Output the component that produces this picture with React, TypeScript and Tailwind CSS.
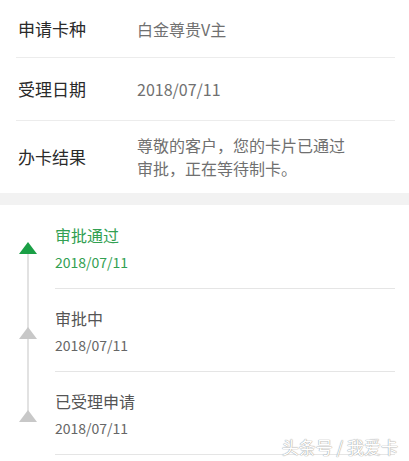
import React from "react";

const font = { fontFamily: '"Noto Sans CJK SC", "Noto Sans", sans-serif' };

function Tri({ color }: { color: string }) {
  return (
    <svg width="18" height="12" viewBox="0 0 18 12" className="block">
      <polygon points="9,0 18,12 0,12" fill={color} />
    </svg>
  );
}

const steps = [
  { title: "审批通过", date: "2018/07/11", active: true },
  { title: "审批中", date: "2018/07/11", active: false },
  { title: "已受理申请", date: "2018/07/11", active: false },
];

export default function App() {
  return (
    <div
      className="relative w-[409px] h-[461px] overflow-hidden bg-white"
      style={font}
    >
      <div className="pl-4 pr-[14px]">
        <div className="flex h-[58px] items-center border-b border-[#ececec]">
          <div className="w-[121px] pl-[2px] text-[17px] text-[#2a2a2a]">申请卡种</div>
          <div className="text-[16px] text-[#707070]">白金尊贵V主</div>
        </div>
        <div className="flex h-[63px] items-center border-b border-[#ececec]">
          <div className="w-[121px] pl-[2px] text-[17px] text-[#2a2a2a]">受理日期</div>
          <div className="text-[16px] text-[#707070]">2018/07/11</div>
        </div>
        <div className="flex h-[72px] items-center">
          <div className="w-[121px] pl-[2px] text-[17px] text-[#2a2a2a]">办卡结果</div>
          <div className="w-[222px] text-[16px] leading-[23px] text-[#707070]">
            尊敬的客户，您的卡片已通过审批，正在等待制卡。
          </div>
        </div>
      </div>
      <div className="h-[12px] bg-[#f2f2f2]" />
      <div className="relative">
        <div className="absolute left-[27px] top-[49px] h-[168px] w-[2px] bg-[#e2e2e2]" />
        {steps.map((s, i) => (
          <div key={i} className="relative flex">
            <div className="relative w-[55px] shrink-0">
              <div className={`absolute left-[19px] ${i === 0 ? "top-[37px]" : "top-[38px]"}`}>
                <Tri color={s.active ? "#1a9f45" : "#c8c8c8"} />
              </div>
            </div>
            <div
              className={`flex-1 mr-[14px] border-b border-[#e5e5e5] ${
                i === 0 ? "pt-[19px]" : "pt-[18px]"
              } pb-[16px]`}
            >
              <div
                className={`text-[16px] leading-[22px] ${
                  s.active ? "text-[#32a052]" : "text-[#555]"
                }`}
              >
                {s.title}
              </div>
              <div
                className={`mt-[6px] text-[14px] leading-[20px] ${
                  s.active ? "text-[#32a052]" : "text-[#666]"
                }`}
              >
                {s.date}
              </div>
            </div>
          </div>
        ))}
      </div>
      <div className="absolute right-[11px] top-[435px] text-[17px] leading-[24px] text-white [text-shadow:0_0_1px_#999,0_0_1px_#999]">
        头条号 / 我爱卡
      </div>
    </div>
  );
}
